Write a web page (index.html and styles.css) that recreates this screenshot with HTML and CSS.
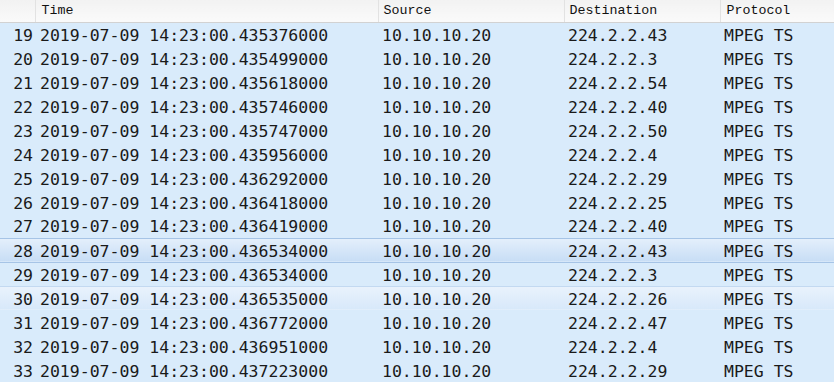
FILE: index.html
```html
<!DOCTYPE html>
<html lang="en">
<head>
    <meta charset="UTF-8">
    <title>Packet List</title>
    <link rel="stylesheet" href="styles.css">
</head>
<body>
    <table class="packets">
        <thead>
            <tr>
                <th class="col-no"></th>
                <th class="col-time">Time</th>
                <th class="col-src">Source</th>
                <th class="col-dst">Destination</th>
                <th class="col-proto">Protocol</th>
            </tr>
        </thead>
        <tbody>
            <tr><td class="col-no">19</td><td>2019-07-09 14:23:00.435376000</td><td>10.10.10.20</td><td>224.2.2.43</td><td>MPEG TS</td></tr>
            <tr><td class="col-no">20</td><td>2019-07-09 14:23:00.435499000</td><td>10.10.10.20</td><td>224.2.2.3</td><td>MPEG TS</td></tr>
            <tr><td class="col-no">21</td><td>2019-07-09 14:23:00.435618000</td><td>10.10.10.20</td><td>224.2.2.54</td><td>MPEG TS</td></tr>
            <tr><td class="col-no">22</td><td>2019-07-09 14:23:00.435746000</td><td>10.10.10.20</td><td>224.2.2.40</td><td>MPEG TS</td></tr>
            <tr><td class="col-no">23</td><td>2019-07-09 14:23:00.435747000</td><td>10.10.10.20</td><td>224.2.2.50</td><td>MPEG TS</td></tr>
            <tr><td class="col-no">24</td><td>2019-07-09 14:23:00.435956000</td><td>10.10.10.20</td><td>224.2.2.4</td><td>MPEG TS</td></tr>
            <tr><td class="col-no">25</td><td>2019-07-09 14:23:00.436292000</td><td>10.10.10.20</td><td>224.2.2.29</td><td>MPEG TS</td></tr>
            <tr><td class="col-no">26</td><td>2019-07-09 14:23:00.436418000</td><td>10.10.10.20</td><td>224.2.2.25</td><td>MPEG TS</td></tr>
            <tr><td class="col-no">27</td><td>2019-07-09 14:23:00.436419000</td><td>10.10.10.20</td><td>224.2.2.40</td><td>MPEG TS</td></tr>
            <tr class="selected"><td class="col-no">28</td><td>2019-07-09 14:23:00.436534000</td><td>10.10.10.20</td><td>224.2.2.43</td><td>MPEG TS</td></tr>
            <tr><td class="col-no">29</td><td>2019-07-09 14:23:00.436534000</td><td>10.10.10.20</td><td>224.2.2.3</td><td>MPEG TS</td></tr>
            <tr class="hover"><td class="col-no">30</td><td>2019-07-09 14:23:00.436535000</td><td>10.10.10.20</td><td>224.2.2.26</td><td>MPEG TS</td></tr>
            <tr><td class="col-no">31</td><td>2019-07-09 14:23:00.436772000</td><td>10.10.10.20</td><td>224.2.2.47</td><td>MPEG TS</td></tr>
            <tr><td class="col-no">32</td><td>2019-07-09 14:23:00.436951000</td><td>10.10.10.20</td><td>224.2.2.4</td><td>MPEG TS</td></tr>
            <tr><td class="col-no">33</td><td>2019-07-09 14:23:00.437223000</td><td>10.10.10.20</td><td>224.2.2.29</td><td>MPEG TS</td></tr>
        </tbody>
    </table>
</body>
</html>
```

FILE: styles.css
```css
html, body {
    margin: 0;
    background: #d9ebfb;
    overflow: hidden;
}
.packets {
    border-collapse: collapse;
    table-layout: fixed;
    width: 834px;
}
.packets th,
.packets td {
    box-sizing: border-box;
}
.packets th {
    height: 22px;
    padding: 0 0 1px 5px;
    text-align: left;
    font-family: "Liberation Mono", monospace;
    font-size: 13.3px;
    font-weight: normal;
    color: #111;
    background: linear-gradient(#f2f2f2, #fafafa);
    border-right: 1px solid #e2e2e2;
    border-bottom: 1px solid #d2d2d2;
    white-space: nowrap;
}
.packets th.col-time,
.packets th.col-proto {
    padding-left: 6px;
}
.col-no { width: 35px; }
.col-time { width: 343px; }
.col-src { width: 186px; }
.col-dst { width: 156px; }
.col-proto { width: 114px; }
.packets td {
    height: 24px;
    padding: 2px 0 0 4px;
    font-family: "DejaVu Sans Mono", monospace;
    font-size: 16.5px;
    color: #1a1a1a;
    white-space: nowrap;
    overflow: hidden;
}
.packets td.col-no {
    text-align: right;
    padding: 2px 2px 0 0;
}
.packets td:nth-child(2) {
    padding-left: 5px;
}
.packets tr.selected td {
    background: linear-gradient(#e4effb, #c7ddf5);
    border-top: 1px solid #a6c4e6;
    border-bottom: 1px solid #a6c4e6;
}
.packets tr.hover td {
    background: linear-gradient(#e9f2fc, #d7e8fa);
    border-top: 1px solid #c3d9f1;
}
```
